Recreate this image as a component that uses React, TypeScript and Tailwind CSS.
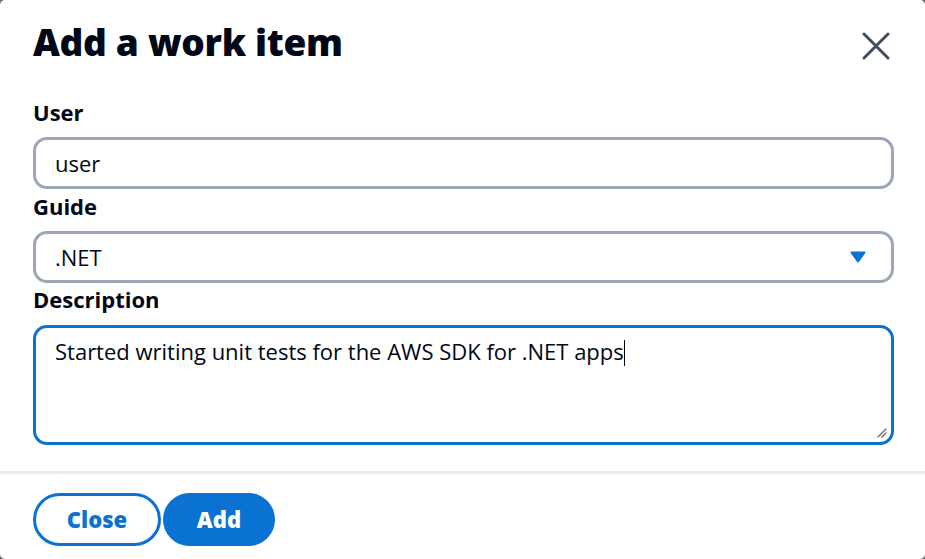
import React from 'react';

const font = { fontFamily: '"Open Sans", "Noto Sans", sans-serif' };

const CloseIcon = () => (
  <svg width="28" height="28" viewBox="0 0 28 28" fill="none">
    <path d="M2 2 L26 26 M26 2 L2 26" stroke="#414d5c" strokeWidth="3" strokeLinecap="round" />
  </svg>
);

const Caret = () => (
  <svg width="16" height="12" viewBox="0 0 16 12">
    <path d="M1.5 1.5 H14.5 L8 10.5 Z" fill="#0972d3" stroke="#0972d3" strokeWidth="2" strokeLinejoin="round" />
  </svg>
);

const ResizeGrip = () => (
  <svg width="10" height="10" viewBox="0 0 10 10" className="absolute right-[4px] bottom-[4px]">
    <path d="M1 9 L9 1 M5 9 L9 5" stroke="#6b6b6b" strokeWidth="1.3" strokeLinecap="round" />
  </svg>
);

export default function App() {
  return (
    <div className="w-[925px] h-[559px] bg-[#5f6b7a] overflow-hidden" style={font}>
      <div className="w-full h-full bg-white rounded-[5px] flex flex-col">
        <div className="flex items-start justify-between pl-[33px] pr-[31px] pt-[19px]">
          <h2 className="text-[37px] leading-[46px] font-extrabold text-[#000716] tracking-[-0.3px]">Add a work item</h2>
          <button className="mt-[13px] mr-[4px]">
            <CloseIcon />
          </button>
        </div>

        <div className="flex flex-col pl-[33px] pr-[31px] pt-[32px] pb-[26px] border-b-[3px] border-[#e9ebed]">
          <label className="text-[22px] leading-[30px] font-bold text-[#000716] mb-[10px]">User</label>
          <input
            defaultValue="user"
            className="h-[52px] w-full border-[3px] border-[#9ba7b6] rounded-[14px] pl-[19px] pr-4 text-[22px] text-[#000716] outline-none mb-[2px]"
          />
          <label className="text-[22px] leading-[30px] font-bold text-[#000716] mb-[10px]">Guide</label>
          <div className="h-[52px] w-full border-[3px] border-[#9ba7b6] rounded-[14px] pl-[19px] pr-[25px] flex items-center justify-between text-[22px] text-[#000716] mb-[1px]">
            <span>.NET</span>
            <Caret />
          </div>
          <label className="text-[22px] leading-[30px] font-bold text-[#000716] mb-[11px]">Description</label>
          <div className="relative h-[120px] w-full border-[3px] border-[#0972d3] rounded-[14px] pl-[19px] pr-4 pt-[8px] text-[22px] leading-[30px] text-[#000716]">
            <span>Started writing unit tests for the AWS SDK for .NET apps</span>
            <span className="inline-block w-[1.5px] h-[26px] bg-[#000716] align-middle -mt-[3px]" />
            <ResizeGrip />
          </div>
        </div>

        <div className="flex items-center gap-[2px] px-[33px] pt-[19px]">
          <button className="h-[53px] w-[128px] rounded-full border-[3px] border-[#0972d3] bg-white text-[#0972d3] text-[22px] font-extrabold">
            Close
          </button>
          <button className="h-[53px] w-[112px] rounded-full bg-[#0972d3] text-white text-[22px] font-extrabold">
            Add
          </button>
        </div>
      </div>
    </div>
  );
}
